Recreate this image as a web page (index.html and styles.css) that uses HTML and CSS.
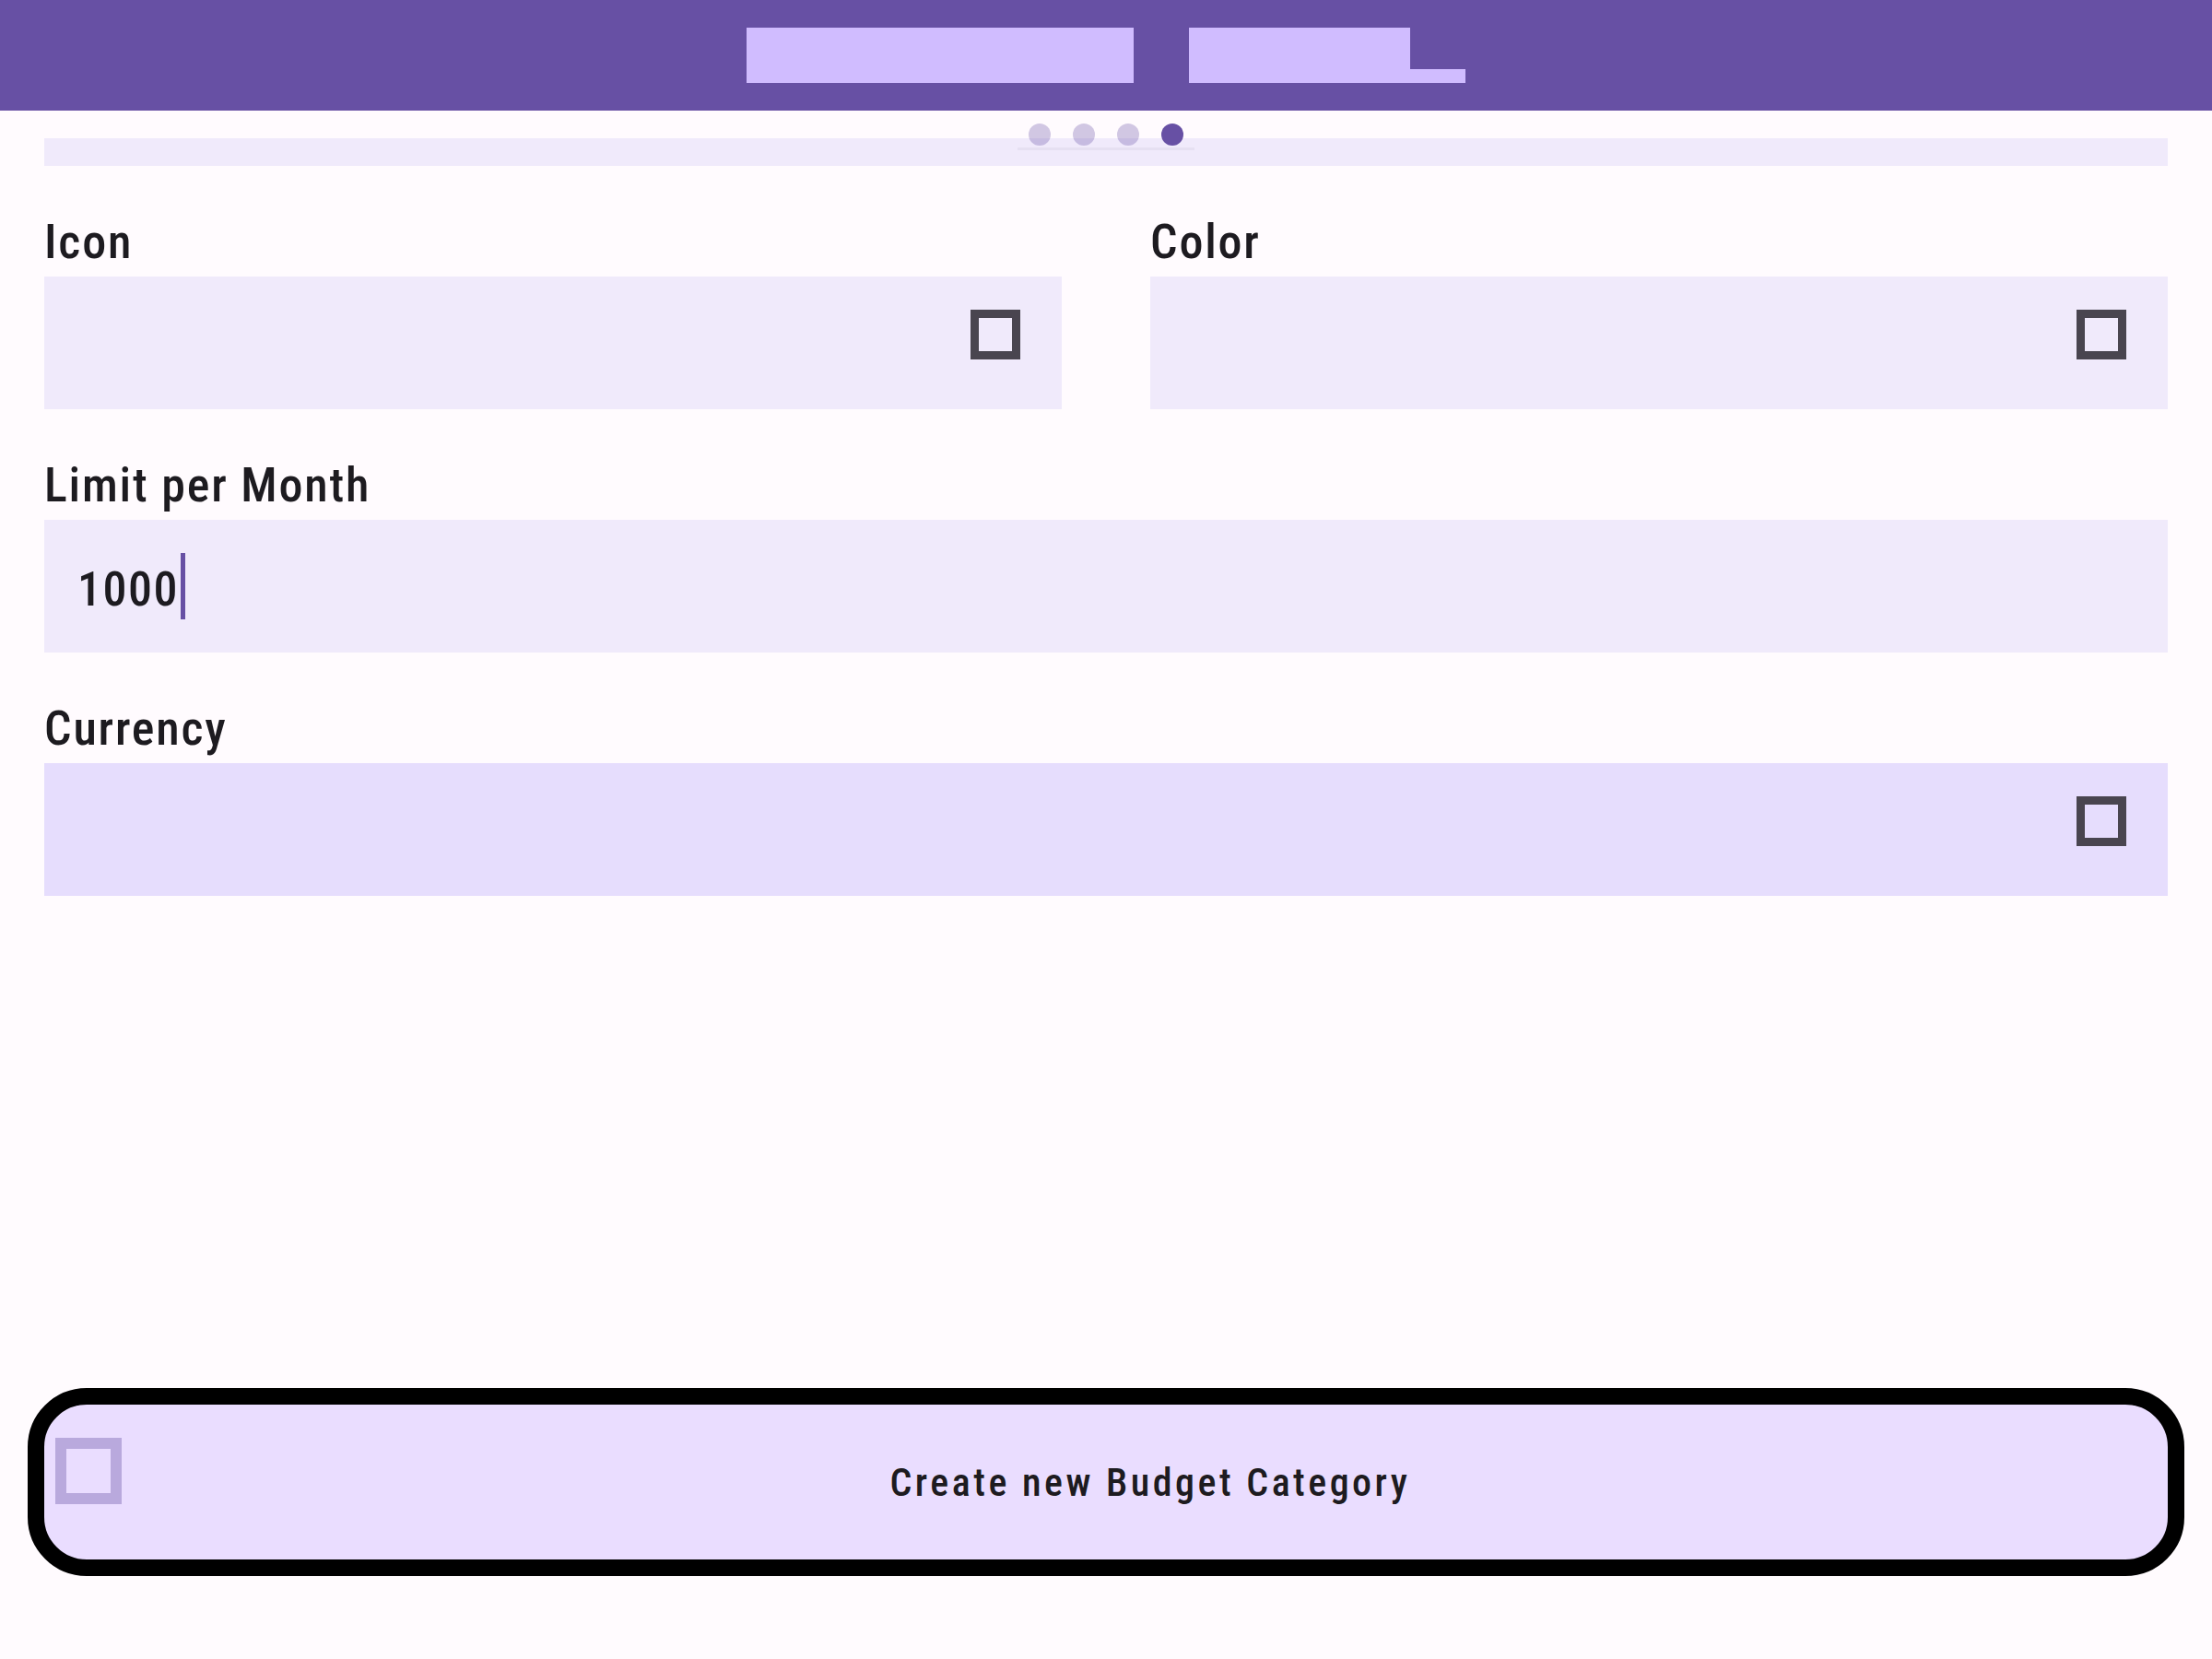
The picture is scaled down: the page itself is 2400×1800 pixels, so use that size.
FILE: index.html
```html
<!DOCTYPE html>
<html lang="en">
<head>
<meta charset="utf-8">
<title>Create Budget Category</title>
<link rel="stylesheet" href="styles.css">
</head>
<body>
<div class="page">
  <header class="appbar">
    <div class="title" aria-label="Title">
      <span class="glyphs glyphs-7"></span>
      <span class="glyphs glyphs-4"></span>
      <span class="glyph-desc"></span>
    </div>
  </header>

  <main class="content">
    <div class="pager">
      <div class="dots">
        <span class="dot"></span>
        <span class="dot"></span>
        <span class="dot"></span>
        <span class="dot active"></span>
      </div>
      <div class="pager-bar"></div>
    </div>

    <div class="strip"></div>

    <div class="row two">
      <div class="group">
        <label class="label">Icon</label>
        <div class="field">
          <span class="box-icon"></span>
        </div>
      </div>
      <div class="group">
        <label class="label">Color</label>
        <div class="field">
          <span class="box-icon"></span>
        </div>
      </div>
    </div>

    <div class="group">
      <label class="label">Limit per Month</label>
      <div class="field input">
        <span class="value">1000</span><span class="caret"></span>
      </div>
    </div>

    <div class="group">
      <label class="label">Currency</label>
      <div class="field hovered">
        <span class="box-icon"></span>
      </div>
    </div>
  </main>

  <footer class="actions">
    <button class="create-btn" type="button">
      <span class="btn-icon"></span>
      <span class="btn-text">Create new Budget Category</span>
    </button>
  </footer>
</div>
</body>
</html>
```

FILE: styles.css
```css
* {
  box-sizing: border-box;
}

html, body {
  margin: 0;
  padding: 0;
  background: #fffbfe;
}

body {
  font-family: Roboto, "Noto Sans", "Liberation Sans", sans-serif;
  font-stretch: 85%;
  color: #1d1b20;
}

.page {
  width: 2400px;
  height: 1800px;
  display: flex;
  flex-direction: column;
  position: relative;
}

/* App bar */
.appbar {
  height: 120px;
  background: #6750a4;
  display: flex;
  align-items: center;
  justify-content: center;
  flex: none;
}

.title {
  display: flex;
  align-items: flex-end;
  height: 60px;
}

.glyphs {
  display: block;
  height: 60px;
  background: #d0bcff;
}

.glyphs-7 {
  width: 420px;
  margin-right: 60px;
}

.glyphs-4 {
  width: 240px;
}

.glyph-desc {
  display: block;
  width: 60px;
  height: 15px;
  background: #d0bcff;
}

/* Content */
.content {
  flex: 1;
  padding: 30px 48px 0;
  display: flex;
  flex-direction: column;
  gap: 52px;
}

.pager {
  position: absolute;
  top: 134px;
  left: 1104px;
  width: 192px;
  display: flex;
  flex-direction: column;
  gap: 2px;
}

.dots {
  display: flex;
  justify-content: center;
  gap: 24px;
  height: 24px;
}

.dot {
  width: 24px;
  height: 24px;
  border-radius: 50%;
  background: rgba(103, 80, 164, 0.3);
}

.dot.active {
  background: #6750a4;
}

.pager-bar {
  height: 3px;
  background: rgba(60, 40, 80, 0.05);
}

.strip {
  height: 30px;
  background: #f0eafb;
}

.row.two {
  display: grid;
  grid-template-columns: 1fr 1fr;
  column-gap: 96px;
}

.group {
  display: flex;
  flex-direction: column;
}

.label {
  display: block;
  font-size: 52px;
  line-height: 60px;
  font-weight: 500;
  font-stretch: 85%;
  letter-spacing: 1.8px;
  padding-top: 1px;
  margin-bottom: 7px;
  color: #1d1b20;
}

.field {
  height: 144px;
  background: #f0eafb;
  display: flex;
  align-items: flex-start;
  justify-content: flex-end;
  padding: 36px 45px 0 40px;
}

.field.hovered {
  background: #e6ddfd;
}

.field.input {
  justify-content: flex-start;
  align-items: center;
  padding: 0 36px;
}

.value {
  font-size: 52px;
  font-weight: 500;
  font-stretch: 85%;
  letter-spacing: 1.5px;
  line-height: 60px;
  margin-top: 8px;
}

.caret {
  display: block;
  width: 5px;
  height: 72px;
  background: #6750a4;
  margin-left: 2px;
}

.box-icon {
  display: block;
  width: 54px;
  height: 54px;
  border: 9px solid #49454f;
}

/* Bottom action */
.actions {
  flex: none;
  padding: 0 30px 90px;
}

.create-btn {
  width: 100%;
  height: 204px;
  border: 18px solid #000;
  border-radius: 64px;
  background: #eaddff;
  display: flex;
  align-items: flex-start;
  padding: 36px 12px 0;
  font-family: Roboto, "Noto Sans", "Liberation Sans", sans-serif;
  cursor: pointer;
}

.btn-icon {
  display: block;
  flex: none;
  width: 72px;
  height: 72px;
  border: 12px solid #b9a9dd;
}

.btn-text {
  flex: 1;
  align-self: center;
  margin-top: -36px;
  text-align: center;
  font-size: 42px;
  font-weight: 500;
  font-stretch: 85%;
  letter-spacing: 3.5px;
  color: #1d1b20;
  padding-left: 24px;
}
```
